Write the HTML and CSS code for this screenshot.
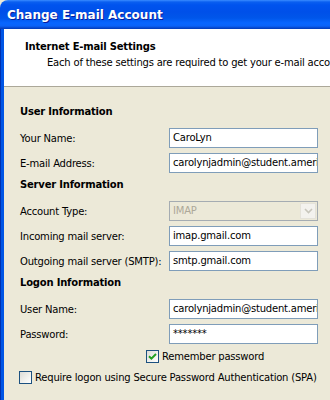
FILE: index.html
```html
<!DOCTYPE html>
<html>
<head>
<meta charset="utf-8">
<link rel="stylesheet" href="styles.css">
</head>
<body>
<div class="window">
  <div class="titlebar"><span class="title">Change E-mail Account</span></div>
  <div class="frame">
    <div class="header">
      <div class="h-title">Internet E-mail Settings</div>
      <div class="h-sub">Each of these settings are required to get your e-mail account working.</div>
    </div>
    <div class="content">
      <div class="section">User Information</div>
      <div class="row"><label>Your Name:</label><div class="input">CaroLyn</div></div>
      <div class="row"><label>E-mail Address:</label><div class="input">carolynjadmin@student.american.edu</div></div>

      <div class="section">Server Information</div>
      <div class="row"><label>Account Type:</label><div class="input select"><span>IMAP</span><span class="drop"><svg width="9" height="6" viewBox="0 0 9 6"><path d="M1 1 L4.5 4.5 L8 1" fill="none" stroke="#C8C6BC" stroke-width="1.6"/></svg></span></div></div>
      <div class="row"><label>Incoming mail server:</label><div class="input">imap.gmail.com</div></div>
      <div class="row"><label>Outgoing mail server (SMTP):</label><div class="input">smtp.gmail.com</div></div>

      <div class="section">Logon Information</div>
      <div class="row"><label>User Name:</label><div class="input">carolynjadmin@student.american.edu</div></div>
      <div class="row"><label>Password:</label><div class="input pw">*******</div></div>
      <div class="check remember"><span class="box"><svg width="9" height="9" viewBox="0 0 9 9"><path d="M1 4.2 L3.4 6.6 L8 2" fill="none" stroke="#21A121" stroke-width="2"/></svg></span><span>Remember password</span></div>
      <div class="check spa"><span class="box"></span><span>Require logon using Secure Password Authentication (SPA)</span></div>
    </div>
  </div>
</div>
</body>
</html>
```
FILE: styles.css
```css
html, body {
  margin: 0;
  padding: 0;
  width: 330px;
  height: 400px;
  overflow: hidden;
  background: #ECE9D8;
}
body {
  font-family: Tahoma, "DejaVu Sans", sans-serif;
  font-size: 10px;
  letter-spacing: -0.2px;
  color: #000;
}
.window {
  width: 380px;
  height: 400px;
  border-top-left-radius: 8px;
  overflow: hidden;
  background: #ECE9D8;
}
.titlebar {
  height: 29px;
  box-sizing: border-box;
  padding-left: 7px;
  display: flex;
  align-items: center;
  background: linear-gradient(to bottom, #3A8CFF 0, #0A5FF0 2px, #0053EE 5px, #0050E9 12px, #0056EA 18px, #0866FF 23px, #0A63F8 26px, #0746C9 28px, #003AB8 29px);
}
.title {
  color: #fff;
  font-family: "DejaVu Sans", sans-serif;
  font-weight: bold;
  font-size: 12px;
  letter-spacing: 0;
  text-shadow: 1px 1px 0 #0A1C9B;
  padding-top: 1px;
}
.frame {
  border-left: 4px solid #0055E5;
  position: relative;
  height: 371px;
  box-sizing: border-box;
}
.frame::before {
  content: "";
  position: absolute;
  left: -4px;
  top: 0;
  bottom: 0;
  width: 1px;
  background: #0030B0;
}
.header {
  background: #fff;
  height: 58px;
  box-sizing: border-box;
  border-bottom: 1px solid #ACA899;
  padding: 10px 0 0 21px;
  white-space: nowrap;
}
.h-title {
  font-weight: bold;
  line-height: 15px;
}
.h-sub {
  padding-left: 22px;
  line-height: 15px;
  margin-top: 1px;
}
.content {
  padding: 18px 0 0 16px;
}
.section {
  font-weight: bold;
  line-height: 14px;
  margin: 5px 0 9px;
}
.content .section:first-child {
  margin-top: 0;
}
.row {
  display: flex;
  align-items: center;
  height: 20px;
  margin-bottom: 5px;
}
.row label {
  width: 149px;
  flex: none;
}
.input {
  width: 149px;
  height: 20px;
  box-sizing: border-box;
  border: 1px solid #7F9DB9;
  background: #fff;
  padding: 0 3px;
  line-height: 18px;
  white-space: nowrap;
  overflow: hidden;
}
.select {
  background: #ECE9D8;
  color: #ACA899;
  border-color: #A5ACB2;
  display: flex;
  justify-content: space-between;
  align-items: center;
  padding-right: 1px;
}
.drop {
  width: 16px;
  height: 16px;
  box-sizing: border-box;
  background: #F3F2EE;
  border: 1px solid #E4E2D9;
  display: flex;
  align-items: center;
  justify-content: center;
}
.check {
  display: flex;
  align-items: center;
  white-space: nowrap;
  height: 14px;
}
.box {
  width: 13px;
  height: 13px;
  box-sizing: border-box;
  border: 1px solid #1C5180;
  background: linear-gradient(135deg, #DCDCD7 0, #F2F2EE 60%, #FFFFFF 100%);
  display: flex;
  align-items: center;
  justify-content: center;
  margin-right: 3px;
  flex: none;
}
.remember {
  margin: 1px 0 0 126px;
}
.spa {
  margin: 7px 0 0 -1px;
}
```
